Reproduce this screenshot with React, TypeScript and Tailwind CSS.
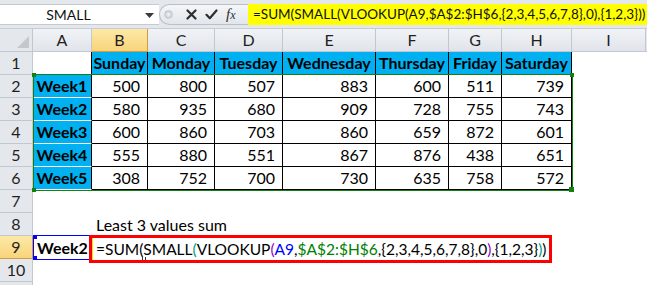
import React from "react";

const letters = ["A", "B", "C", "D", "E", "F", "G", "H", "I"];
const days = ["Sunday", "Monday", "Tuesday", "Wednesday", "Thursday", "Friday", "Saturday"];
const data: [string, number[]][] = [
  ["Week1", [500, 800, 507, 883, 600, 511, 739]],
  ["Week2", [580, 935, 680, 909, 728, 755, 743]],
  ["Week3", [600, 860, 703, 860, 659, 872, 601]],
  ["Week4", [555, 880, 551, 867, 876, 438, 651]],
  ["Week5", [308, 752, 700, 730, 635, 758, 572]],
];

const colHdr =
  "flex items-center justify-center border-r border-b border-[#c2c8d0] bg-linear-to-b from-[#f1f3f6] to-[#e0e4ea] text-[16px] text-[#1f1f1f]";
const colHdrActive =
  "flex items-center justify-center border-r border-b border-[#d39b47] bg-linear-to-b from-[#fde9a6] to-[#f8d47a] text-[16px] text-[#1f1f1f]";
const rowHdr =
  "flex items-end justify-center pb-[1px] border-r border-b border-[#c2c8d0] bg-[#e4e8ed] text-[16px] leading-[20px] text-[#1f1f1f]";
const rowHdrActive =
  "flex items-end justify-center pb-[1px] border-r border-b border-[#d39b47] bg-linear-to-b from-[#fde9a6] to-[#f8d47a] text-[16px] leading-[20px] text-[#1f1f1f]";

export default function App() {
  return (
    <div className="relative h-[285px] w-[647px] overflow-hidden bg-white text-black [font-family:Lato,'Noto_Sans',sans-serif]">
      {/* Formula bar */}
      <div className="flex h-[29px] border-b border-[#c6ccd4] bg-[#e4e8ed] pt-[4px] pb-[3px]">
        <div className="relative flex w-[159px] items-center justify-center border-y border-[#c4cad2] bg-white pr-[22px] text-[14px] leading-none text-[#111]">
          SMALL
          <svg className="absolute right-[5px] top-[8px]" width="9" height="5" viewBox="0 0 9 5">
            <path d="M0 0H9L4.5 5Z" fill="#3a3a3a" />
          </svg>
        </div>
        <div className="flex w-[89px] items-center rounded-l-full border-l border-y border-[#b9c0c9] bg-linear-to-b from-[#f4f6f8] to-[#e2e6eb]">
          <div className="ml-[4px] h-[9px] w-[9px] rounded-full border border-[#c7cbd0] bg-radial from-[#f5f5f5] to-[#b8bcc2]" />
          <svg className="ml-[13px]" width="11" height="11" viewBox="0 0 11 11">
            <path d="M1.5 1.5L9.5 9.5M9.5 1.5L1.5 9.5" stroke="#2e2e2e" strokeWidth="2.2" strokeLinecap="round" />
          </svg>
          <svg className="ml-[8px]" width="13" height="11" viewBox="0 0 13 11">
            <path d="M1.5 5.8L4.8 9.2L11.5 1.5" stroke="#2e2e2e" strokeWidth="2.2" fill="none" strokeLinecap="round" strokeLinejoin="round" />
          </svg>
          <span className="ml-[8px] text-[15px] italic leading-none text-[#2e2e2e] [font-family:'Liberation_Serif',serif]">
            f<span className="text-[12px]">x</span>
          </span>
        </div>
        <div className="flex flex-1 items-center whitespace-nowrap bg-[#ffff00] pl-[5px] text-[13.5px] leading-none text-[#111]">
          =SUM(SMALL(VLOOKUP(A9,$A$2:$H$6,&#123;2,3,4,5,6,7,8&#125;,0),&#123;1,2,3&#125;))
        </div>
      </div>

      {/* Sheet grid */}
      <div className="grid grid-cols-[33px_59px_56px_67px_68px_93px_73px_53px_70px_74px_1fr] auto-rows-[23px] text-[16px] leading-[20px]">
        {/* column headers */}
        <div className="relative border-r border-b border-[#c2c8d0] bg-[#e4e8ed]">
          <svg className="absolute right-[3px] bottom-[3px]" width="12" height="12" viewBox="0 0 12 12">
            <path d="M12 0V12H0Z" fill="#c3c8cf" />
          </svg>
        </div>
        {letters.map((l) => (
          <div key={l} className={l === "B" ? colHdrActive : colHdr}>
            {l}
          </div>
        ))}
        <div className="border-b border-[#c2c8d0] bg-[#e4e8ed]" />

        {/* row 1 */}
        <div className={rowHdr}>1</div>
        <div className="border-r border-black bg-white" />
        {days.map((d) => (
          <div
            key={d}
            className="flex items-end justify-center border-r border-b border-black bg-[#00b0f0] pb-[1px] font-bold"
          >
            {d}
          </div>
        ))}
        <div />
        <div />

        {/* rows 2-6 */}
        {data.map(([w, vals], i) => (
          <React.Fragment key={w}>
            <div className={rowHdr}>{i + 2}</div>
            <div className="flex items-end justify-center border-r border-b border-r-black border-b-white bg-[#00b0f0] pb-[1px] font-bold">
              {w}
            </div>
            {vals.map((v, j) => (
              <div key={j} className="flex items-end justify-end border-r border-b border-black pr-[7px] pb-[1px]">
                {v}
              </div>
            ))}
            <div />
            <div />
          </React.Fragment>
        ))}

        {/* row 7 */}
        <div className={rowHdr}>7</div>
        <div className="col-span-10" />

        {/* row 8 */}
        <div className={rowHdr}>8</div>
        <div />
        <div className="col-span-9 flex items-end whitespace-nowrap pb-[1px] pl-[4px]">Least 3 values sum</div>

        {/* row 9 */}
        <div className={rowHdrActive}>9</div>
        <div className="flex items-end justify-center pb-[1px] font-bold">Week2</div>
        <div className="col-span-9">
          <div className="relative z-10 -mt-[1px] -ml-[3px] flex h-[28px] w-[463px] border-[3px] border-[#ff0000] bg-white">
            <div className="w-[1px] bg-[#e6e600]" />
            <div className="flex items-center whitespace-nowrap pl-[3px] pb-[1px] text-[15.5px]">
              <span>=SUM(SMALL</span>
              <span className="text-[#00a08a]">(</span>
              <span>VLOOKUP</span>
              <span className="text-[#9b00c8]">(</span>
              <span className="text-[#0000ff]">A9</span>
              <span>,</span>
              <span className="text-[#008000]">$A$2:$H$6</span>
              <span>,&#123;2,3,4,5,6,7,8&#125;,0</span>
              <span className="text-[#9b00c8]">)</span>
              <span>,&#123;1,2,3&#125;</span>
              <span className="text-[#00a08a]">)</span>
              <span>)</span>
            </div>
            <div className="absolute left-[50px] bottom-[0px] flex gap-[2px]">
              <div className="h-[3px] w-[1px] bg-[#333]" />
              <div className="h-[3px] w-[1px] bg-[#333]" />
            </div>
          </div>
        </div>

        {/* row 10 */}
        <div className={rowHdr}>10</div>
        <div className="col-span-10" />

        {/* row 11 (cut off) */}
        <div className={rowHdr} />
        <div className="col-span-10" />
      </div>

      {/* reference highlight: A2:H6 (green) */}
      <div className="pointer-events-none absolute left-[33px] top-[74px] h-[117px] w-[540px] border border-[#128112]" />
      <div className="absolute left-[32px] top-[73px] h-[4px] w-[4px] bg-[#128112]" />
      <div className="absolute left-[32px] top-[188px] h-[4px] w-[4px] bg-[#128112]" />
      <div className="absolute left-[570px] top-[73px] h-[4px] w-[4px] bg-[#128112]" />
      <div className="absolute left-[569px] top-[187px] h-[5px] w-[5px] bg-[#128112]" />

      {/* reference highlight: A9 (blue) */}
      <div className="pointer-events-none absolute left-[33px] top-[235px] h-[25px] w-[58px] border border-[#0000ff]" />
      <div className="absolute left-[33px] top-[235px] h-[4px] w-[4px] bg-[#0000ff]" />
      <div className="absolute left-[33px] top-[256px] h-[4px] w-[4px] bg-[#0000ff]" />
    </div>
  );
}
